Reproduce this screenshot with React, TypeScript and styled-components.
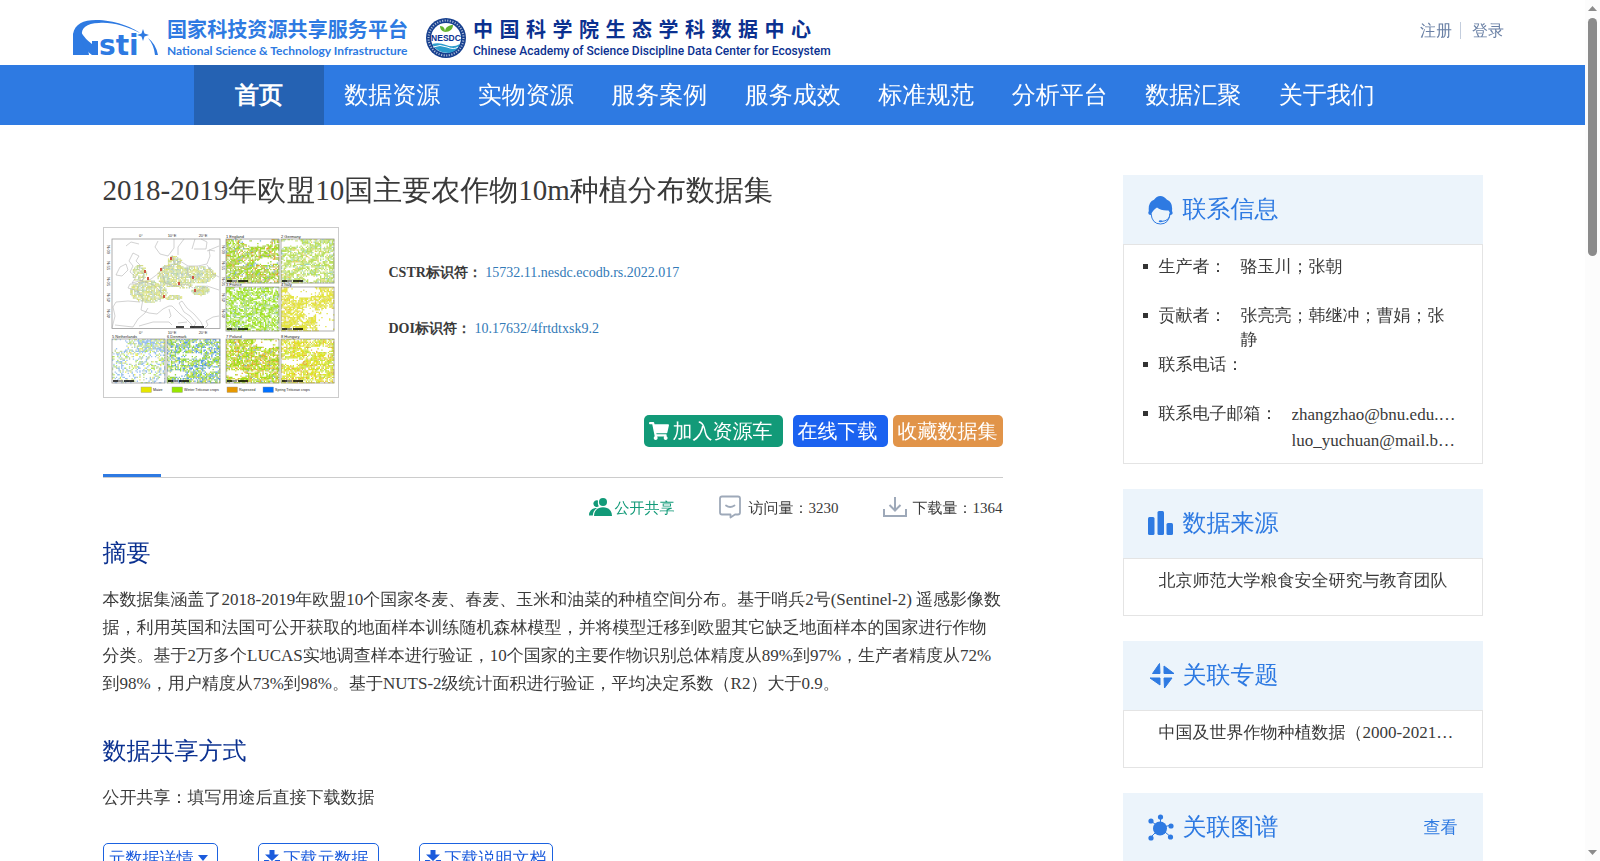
import React from 'react';
import styled, { createGlobalStyle } from 'styled-components';
import { FaShoppingCart } from 'react-icons/fa';

const blue = '#2e7ae2';
const navy = '#0b3190';
const green = '#129a78';
const serif = '"Liberation Serif", "WenQuanYi Zen Hei", "WenQuanYi Micro Hei", "Droid Sans Fallback", "Noto Sans CJK SC", serif';
const boldSerif = '"Liberation Serif", serif';
const sans = '"Liberation Sans", "Noto Sans CJK SC", sans-serif';

const GlobalStyle = createGlobalStyle`
  * { box-sizing: border-box; }
  body { margin: 0; background: #fff; color: #3a3a3a; font-family: ${serif}; }
  a { text-decoration: none; color: inherit; }
  h1, h2, h3, p, ul, dl, dd { margin: 0; padding: 0; font-weight: 400; }
  button { font-family: inherit; cursor: pointer; }
`;

/* ---------- page frame ---------- */

const Shell = styled.div`
  display: flex;
  height: 100vh;
`;

const Page = styled.div`
  flex: 1;
  min-width: 0;
  overflow: auto;
  scrollbar-width: none;
`;

const ScrollTrack = styled.div`
  display: flex;
  flex-direction: column;
  align-items: center;
  width: 15px;
  padding: 6px 0;
  background: #fcfcfc;
`;

const ScrollThumb = styled.div`
  width: 9px;
  height: 28%;
  margin: 7px 0 auto;
  border-radius: 5px;
  background: #8b8b8b;
`;

const ScrollArrow = styled.svg`
  display: block;
  width: 9px;
  height: 5px;
  fill: #8b8b8b;
`;

/* ---------- header ---------- */

const Header = styled.header`
  display: flex;
  justify-content: space-between;
  height: 65px;
  padding: 0 81px 0 72px;
`;

const Brand = styled.div`
  display: flex;
  align-items: flex-start;
  padding-top: 17px;
`;

const BrandText = styled.div<{ $color: string; $width: number }>`
  width: ${(p) => p.$width}px;
  color: ${(p) => p.$color};
  font-family: ${sans};
  white-space: nowrap;
`;

const BrandName = styled.div`
  font-size: 20px;
  line-height: 26px;
  font-weight: 700;
  text-align-last: justify;
`;

const BrandSub = styled.div<{ $face: string; $weight: number }>`
  font-family: ${(p) => p.$face}, sans-serif;
  font-size: 12px;
  font-weight: ${(p) => p.$weight};
  line-height: 16px;
`;

const NstiMark = styled.svg`
  width: 88px;
  height: 40px;
  margin-right: 7px;
`;

const NesdcMark = styled.svg`
  width: 42px;
  height: 42px;
  margin: 0 6px 0 17px;
`;

const Account = styled.div`
  display: flex;
  align-items: flex-start;
  padding-top: 22px;
  color: #6a80a5;
  font-size: 16px;
  line-height: 17px;
`;

const AccountLink = styled.a`
  & + & {
    margin-left: 8px;
    padding-left: 11px;
    border-left: 1px solid #c3cddd;
  }
`;

const Nav = styled.nav`
  background: ${blue};
`;

const NavList = styled.div`
  display: flex;
  max-width: 1198px;
  margin: 0 auto;
`;

const NavItem = styled.a<{ $active?: boolean }>`
  flex: ${(p) => (p.$active ? '0 0 130px' : '1')};
  padding-left: ${(p) => (p.$active ? 0 : 4)}px;
  background: ${(p) => (p.$active ? '#2562b3' : 'transparent')};
  font-family: ${(p) => (p.$active ? boldSerif : 'inherit')};
  font-weight: ${(p) => (p.$active ? 700 : 400)};
  color: #fff;
  font-size: 24px;
  line-height: 60px;
  text-align: center;
  white-space: nowrap;
`;

/* ---------- body ---------- */

const Main = styled.main`
  display: flex;
  gap: 120px;
  max-width: 1380px;
  margin: 0 auto;
  padding-bottom: 60px;
`;

const Article = styled.article`
  flex: 1;
  min-width: 0;
  padding-top: 45px;
`;

const Title = styled.h1`
  font-size: 29px;
  line-height: 40px;
`;

const Summary = styled.div`
  display: flex;
  gap: 50px;
  margin-top: 17px;
`;

const Thumb = styled.svg`
  display: block;
  width: 236px;
  height: 171px;
  border: 1px solid #ccc;
`;

const Identifiers = styled.div`
  display: flex;
  flex-direction: column;
  gap: 36px;
  padding-top: 36px;
  font-size: 14px;
  line-height: 20px;
`;

const IdLabel = styled.b`
  font-family: ${boldSerif};
`;

const IdLink = styled.a`
  color: #337ab7;
`;

const Actions = styled.div`
  display: flex;
  justify-content: flex-end;
  margin-top: 17px;
`;

const ActionButton = styled.button<{ $bg: string; $end?: number; $gap?: number }>`
  display: flex;
  align-items: center;
  gap: 4px;
  height: 32px;
  margin-left: ${(p) => p.$gap ?? 0}px;
  padding: 0 ${(p) => p.$end ?? 5}px 0 5px;
  border: 0;
  border-radius: 5px;
  background: ${(p) => p.$bg};
  color: #fff;
  font-size: 20px;
  line-height: 32px;
`;

const Divider = styled.div`
  margin-top: 27px;
  border-bottom: 1px solid #ccc;
  &::before {
    content: '';
    display: block;
    width: 58px;
    height: 3px;
    background: ${blue};
  }
`;

const Stats = styled.div`
  display: flex;
  justify-content: flex-end;
  gap: 44px;
  margin-top: 17px;
  font-size: 15px;
  line-height: 26px;
`;

const Stat = styled.span<{ $color?: string; $gap: number }>`
  display: flex;
  align-items: center;
  gap: ${(p) => p.$gap}px;
  color: ${(p) => p.$color ?? '#3a3a3a'};
  & > svg { display: block; margin-bottom: 2px; }
`;

const SectionTitle = styled.h2<{ $top: number }>`
  margin-top: ${(p) => p.$top}px;
  color: ${navy};
  font-size: 24px;
  line-height: 30px;
`;

const Paragraph = styled.p`
  margin-top: 18px;
  font-size: 17px;
  line-height: 28px;
`;

const Downloads = styled.div`
  display: flex;
  gap: 40px;
  margin-top: 31px;
`;

const OutlineButton = styled.button<{ $end?: number }>`
  display: flex;
  align-items: center;
  gap: 4px;
  height: 32px;
  padding: 0 ${(p) => p.$end ?? 5}px 2px 5px;
  border: 1px solid #1b62e0;
  border-radius: 5px;
  background: #fff;
  color: #1b5bdc;
  font-size: 17px;
`;

/* ---------- sidebar ---------- */

const Sidebar = styled.aside`
  display: flex;
  flex: 0 0 360px;
  flex-direction: column;
  gap: 25px;
  min-width: 0;
  padding-top: 50px;
`;

const PanelHead = styled.div`
  display: flex;
  align-items: center;
  height: 69px;
  padding: 0 25px 2px;
  background: #ecf4fb;
  color: ${blue};
  & > svg { display: block; width: 28px; height: 30px; margin: 4px 7px 0 0; }
`;

const PanelTitle = styled.h3`
  flex: 1;
  font-size: 24px;
  line-height: 36px;
`;

const PanelLink = styled.a`
  padding-top: 2px;
  font-size: 17px;
`;

const PanelBody = styled.div<{ $bottom: number }>`
  padding: 10px 24px ${(p) => p.$bottom}px 35px;
  border: 1px solid #e4e4e4;
  font-size: 17px;
  line-height: 24px;
`;

const Ellipsis = styled.a`
  display: block;
  overflow: hidden;
  text-overflow: ellipsis;
  white-space: nowrap;
`;

const ContactRow = styled.dl`
  display: flex;
  align-items: flex-start;
  min-height: 49px;
  &::before {
    content: '';
    flex: none;
    width: 5px;
    height: 5px;
    margin: 9px 11px 0 -16px;
    background: #333;
  }
`;

const ContactLabel = styled.dt`
  flex: none;
  margin-right: 14px;
`;

const ContactValue = styled.dd`
  flex: 1;
  min-width: 0;
`;

const Mail = styled(Ellipsis)`
  line-height: 26px;
`;

/* ---------- crop map thumbnail ---------- */

const crop = { maize: '#e6e600', winter: '#98e600', rape: '#e69800', spring: '#0070ff' };
const CELL = 1.3;

function random(seed: number) {
  let s = seed;
  return () => {
    s = (s * 1664525 + 1013904223) % 4294967296;
    return s / 4294967296;
  };
}

type Mix = [string, number][];
type Field = { x: number; y: number; name: string; mix: Mix; density: number; holes: [number, number, number, number][] };

const fields: Field[] = [
  { x: 123, y: 12, name: '1 England', density: 0.88, mix: [['#a5dc2a', 0.55], ['#b0c860', 0.25], ['#e0a030', 0.14], ['#7fb0d0', 0.06]], holes: [[30, 0, 15, 7], [40, 22, 12, 3]] },
  { x: 178, y: 12, name: '2 Germany', density: 0.8, mix: [['#bce060', 0.62], ['#d0e080', 0.24], ['#9fd4bc', 0.1], ['#e6d060', 0.04]], holes: [[8, 4, 12, 3], [30, 38, 8, 2]] },
  { x: 123, y: 60, name: '3 France', density: 0.8, mix: [['#a2e42a', 0.6], ['#b0dc78', 0.27], ['#8fc8b0', 0.09], ['#d8e060', 0.04]], holes: [] },
  { x: 178, y: 60, name: '4 Italy', density: 0.9, mix: [['#e4e440', 0.7], ['#dcdc78', 0.22], ['#e6c850', 0.08]], holes: [[22, 3, 16, 7], [46, 34, 12, 14], [28, 24, 6, 5]] },
  { x: 9, y: 112, name: '5 Netherlands', density: 0.45, mix: [['#9cc2ee', 0.5], ['#b4e660', 0.17], ['#c0d8a0', 0.23], ['#ecec60', 0.1]], holes: [[6, 6, 10, 5]] },
  { x: 64, y: 112, name: '6 Denmark', density: 0.8, mix: [['#94d840', 0.42], ['#5fa0e0', 0.27], ['#8fc0b0', 0.17], ['#d8e050', 0.14]], holes: [[22, 16, 14, 3], [8, 34, 10, 3], [44, 30, 8, 2]] },
  { x: 123, y: 112, name: '7 Poland', density: 0.92, mix: [['#a4dc20', 0.5], ['#e0b030', 0.22], ['#d0e030', 0.22], ['#7fb0b0', 0.06]], holes: [[42, 4, 14, 4], [8, 34, 9, 4]] },
  { x: 178, y: 112, name: '8 Hungary', density: 0.86, mix: [['#e2e224', 0.5], ['#c4e440', 0.3], ['#e6b440', 0.2]], holes: [[38, 10, 12, 3], [10, 22, 12, 3]] },
];

function pick(mix: Mix, r: number) {
  let sum = 0;
  for (const [color, share] of mix) {
    sum += share;
    if (r < sum) return color;
  }
  return mix[0][0];
}

function dots(test: (x: number, y: number) => number, mix: Mix, w: number, h: number, seed: number) {
  const rand = random(seed);
  const paths: Record<string, string> = {};
  for (let y = 0; y < h; y += CELL) {
    for (let x = 0; x < w; x += CELL) {
      const keep = rand() < test(x, y);
      const color = pick(mix, rand());
      if (keep) paths[color] = (paths[color] ?? '') + `M${x.toFixed(1)} ${y.toFixed(1)}h${CELL}v${CELL}h-${CELL}z`;
    }
  }
  return Object.entries(paths).map(([color, d]) => <path key={color} d={d} fill={color} />);
}

const inside = (x: number, y: number, e: [number, number, number, number]) =>
  ((x - e[0]) / e[2]) ** 2 + ((y - e[1]) / e[3]) ** 2 < 1;

const farmland: { e: [number, number, number, number]; d: number }[] = [
  { e: [27, 34, 7, 9], d: 0.7 },
  { e: [36, 52, 19, 11], d: 0.8 },
  { e: [60, 36, 15, 12], d: 0.85 },
  { e: [62, 21, 7, 5], d: 0.8 },
  { e: [85, 35, 18, 9], d: 0.8 },
  { e: [88, 51, 9, 5], d: 0.9 },
  { e: [61, 58, 9, 3], d: 0.7 },
  { e: [72, 44, 10, 5], d: 0.6 },
];

function CropMap() {
  return (
    <Thumb viewBox="0 0 234 169" role="img" aria-label="Crop distribution maps" fontFamily="Liberation Sans, sans-serif" fontSize="4">
      <g transform="translate(8 11)">
        <g opacity="0.8">
          {dots(
            (x, y) => farmland.reduce((m, f) => (inside(x, y, f.e) ? Math.max(m, f.d) : m), 0),
            [['#ccd66c', 0.45], ['#b4d48c', 0.28], ['#a8c4b4', 0.17], ['#dede50', 0.1]], 107, 89, 77
          )}
        </g>
        <g fill="none" stroke="#b4b4b4" strokeWidth="0.6">
          <path d="M21 14l6 3-3 5 4 4-1 5 5 4-1 6-11 3 4-6-6-5 3-6-4-5zM8 28l6-3 2 6-6 6-6-1zM14 7l5-4 8 2" />
          <path d="M46 2l-3 6 5 7 8 2 6-8 0-9M66 16l0-8 6-8M60 16l3 10 5-4 8 5 10 0 9-2 3-8-1-6 6 1M80 10l3-10M82 10l12 0 1-7-6-3M95 12l12-5" />
          <path d="M60 27l-8 1-5 6-8 6-6 3-5-2 0 4-10 0-2 4 10 3 5 8-2 11 8 3 8 1 6-5 6-3 3 0 8 8 6 5 5 5 2 4 3-5-6-7-6-4-5-9 3-2 5 7 7 6 7 8 3 7 4-4-2-4 7-4 6-1" />
          <path d="M28 63l-12-1-12 1-3 5 2 9-3 12M3 86l18 2 5-8 7-6 3-5M57 70l2 7-2 2M27 87l14-4 16 0 3 3M33 43l9 3 8 8-2 9M50 34l3 10 10 3 12-2 6 4M75 27l1 9 8 5M95 26l6 9 6 3M81 54l14-7 12 4M66 84l9-1" />
        </g>
        <g fill="#c54">
          {[[33, 33], [36, 40], [49, 31], [59, 20], [67, 45], [81, 39], [83, 52], [52, 58]].map(([x, y]) => (
            <path key={`${x}-${y}`} d={`M${x - 1} ${y + 1}h2v-3h-2z`} />
          ))}
        </g>
        <path d="M64 88h8m6 0h14" stroke="#000" strokeWidth="1.4" />
        <rect width="108" height="89.5" fill="none" stroke="#999" strokeWidth="0.8" />
      </g>
      <g fill="#333">
        {['0°', '10°E', '20°E'].map((t, i) => (
          <React.Fragment key={t}>
            <text x={37 + i * 31} y="9" textAnchor="middle">{t}</text>
            <text x={37 + i * 31} y="106" textAnchor="middle">{t}</text>
          </React.Fragment>
        ))}
        {['60°N', '55°N', '50°N', '45°N', '40°N'].map((t, i) => (
          <React.Fragment key={t}>
            <text transform={`translate(6 ${26 + i * 16}) rotate(-90)`}>{t}</text>
            <text transform={`translate(121 ${26 + i * 16}) rotate(-90)`}>{t}</text>
          </React.Fragment>
        ))}
      </g>
      {fields.map((f, i) => (
        <g key={f.name} transform={`translate(${f.x - 1} ${f.y - 1})`}>
          {dots(
            (x, y) => {
              if (f.holes.some((h) => inside(x, y, h))) return 0.05;
              if (i === 4 && x > 26 && y < 12) return 0.8;
              return f.density * (0.85 + 0.2 * Math.sin(x / 3 + y / 2));
            },
            f.mix, 52, 43, 31 + i * 17
          )}
          <path d="M1 42h5m6 0h10" stroke="#000" strokeWidth="1.6" />
          <path d="M6 42h5" stroke="#777" strokeWidth="1.6" />
          <rect width="53" height="44" fill="none" stroke="#999" strokeWidth="0.8" />
          <text x="0" y="-1" fill="#222">{f.name}</text>
        </g>
      ))}
      {([['Maize', crop.maize, 37], ['Winter Triticeae crops', crop.winter, 68], ['Rapeseed', crop.rape, 123], ['Spring Triticeae crops', crop.spring, 159]] as [string, string, number][]).map(([t, c, x]) => (
        <g key={t}>
          <rect x={x} y="159" width="10.5" height="5.5" fill={c} stroke="#999" strokeWidth="0.4" />
          <text x={x + 12} y="163.4" fontSize="3.6" fill="#222">{t}</text>
        </g>
      ))}
    </Thumb>
  );
}

/* ---------- logos and icons ---------- */

const NstiLogo = () => (
  <NstiMark viewBox="0 0 88 40" fill={blue} aria-label="NSTI">
    <path d="M1 38V17C3 7 11 3 24 3C42 3 60 10 68 16C54 9 40 5 27 6C14 6 9 12 10 18C11 25 16 28 17 38Z" />
    <path d="M9 15Q13 22 20 27V24H26V38H20Q14 34 9 24Z" />
    <path d="M71 12l1.500 4.500 4.500 1.500-4.500 1.500-1.500 4.500-1.500-4.500-4.500-1.500 4.500-1.500z" />
    <path d="M76 21Q84 27 86 38H83Q82 28 76 21Z" />
    <text x="27" y="38" fontFamily="DejaVu Sans, sans-serif" fontWeight="700" fontSize="28">sti</text>
  </NstiMark>
);

const NesdcLogo = () => (
  <NesdcMark viewBox="0 0 42 42" aria-label="NESDC">
    <circle cx="21" cy="21" r="20" fill="#17408f" />
    <circle cx="21" cy="21" r="17.500" fill="none" stroke="#fff" strokeWidth="2" strokeDasharray="1.100 1.500" opacity="0.65" />
    <circle cx="21" cy="21" r="15" fill="#fff" />
    <path d="M20 15C16 14 15 11 15 9C19 9 20 12 20 15ZM20 15C20 10 24 8 28 8C28 12 25 15 20 15Z" fill="#62b32e" />
    <path d="M7 27Q14 25 21 28T35 27Q33 34 24 36Q12 36 7 27Z" fill="#2b9ccc" />
    <path d="M8 30Q15 27 22 30T33 30" fill="none" stroke="#fff" strokeWidth="1" />
    <text x="21" y="24" textAnchor="middle" fill={navy} fontFamily="Liberation Sans, sans-serif" fontWeight="700" fontSize="8.500">NESDC</text>
  </NesdcMark>
);

const PeopleIcon = () => (
  <svg width="23" height="20" viewBox="0 0 23 20" fill="currentColor">
    <circle cx="14" cy="5" r="4" />
    <path d="M5 19C5 13 9 10.200 14 10.200S23 13 23 19Z" />
    <path d="M9 3.400A3.400 3.400 0 1 0 9.800 9.300Q8.700 7.500 8.900 5.500ZM6.500 11Q0 12 0 18.500H3.800Q4 13.500 8 11Z" />
  </svg>
);

const VisitIcon = () => (
  <svg width="22" height="24" viewBox="0 0 22 24" fill="none" stroke="#9ea9b9" strokeWidth="1.800" strokeLinejoin="round" strokeLinecap="round">
    <path d="M3 1.500H19Q21 1.500 21 3.500V17.500Q21 19.500 19 19.500H16L11.500 22.500V19.500H3Q1 19.500 1 17.500V3.500Q1 1.500 3 1.500Z" />
    <path d="M7 10.500Q11 13.500 15.500 10.500" />
  </svg>
);

const TrayIcon = () => (
  <svg width="24" height="22" viewBox="0 0 24 22" fill="none" stroke="#9ea9b9" strokeWidth="2">
    <path d="M1 13V20H23V13M12 1V14M6.500 9L12 14.500L17.500 9" />
  </svg>
);

const SaveIcon = () => (
  <svg width="16" height="18" viewBox="0 0 16 18" fill="currentColor">
    <path d="M5.500 1H10.500V5.500H15L8 12L1 5.500H5.500Z" />
    <path d="M0 11H4.500L8 14L11.500 11H16V17H0Z" />
  </svg>
);

const CaretIcon = () => (
  <svg width="10" height="6" viewBox="0 0 10 6" fill="currentColor">
    <path d="M0 0H10L5 6Z" />
  </svg>
);

const AgentIcon = () => (
  <svg viewBox="0 0 28 30" fill="currentColor">
    <path d="M3 19Q-1 19 .8 15Q0 6 6 3.800Q8.500 0 12.300 0T19 3.800Q25 6 24 15Q26 19 22 19Q22 15.500 20.500 14.500Q13 15 9 11.500Q4.500 14 3 19Z" />
    <path d="M3 17.500Q4 28 12.500 28T22 17.500Q22 25 13 25.500" fill="none" stroke="currentColor" strokeWidth="1" />
    <ellipse cx="12.500" cy="25.300" rx="1.800" ry="1" />
  </svg>
);

const BarsIcon = () => (
  <svg viewBox="0 0 28 30" fill="currentColor">
    <rect x="0" y="7" width="6.500" height="18" rx="1.500" />
    <rect x="9.500" y="1" width="6.500" height="24" rx="1.500" />
    <rect x="18.500" y="13" width="6.500" height="12" rx="1.500" />
  </svg>
);

const PinwheelIcon = () => (
  <svg viewBox="0 0 28 30" fill="currentColor" stroke="currentColor" strokeLinejoin="round">
    <path d="M11.500 1.500L12 11.500H4.500ZM16 4V11.500H26ZM2 16H12V23ZM16 16H24L16.500 26Z" />
  </svg>
);

const GraphIcon = () => (
  <svg viewBox="0 0 28 30" fill="currentColor">
    <path d="M12.500 2V14M3 7L12 14L23 11M3 23L12 14L23 23" stroke="currentColor" fill="none" strokeWidth="1" />
    <circle cx="12" cy="14.500" r="7" />
    <circle cx="12.500" cy="3" r="2.600" />
    <circle cx="3" cy="7" r="2.600" />
    <circle cx="23" cy="12" r="2.600" />
    <circle cx="3" cy="24" r="2.600" />
    <circle cx="22.500" cy="23" r="2.600" />
  </svg>
);

const navItems = ['数据资源', '实物资源', '服务案例', '服务成效', '标准规范', '分析平台', '数据汇聚', '关于我们'];

export default function App() {
  return (
    <>
      <GlobalStyle />
      <Shell>
        <Page>
          <Header>
            <Brand>
              <NstiLogo />
              <BrandText $color={blue} $width={241}>
                <BrandName>国家科技资源共享服务平台</BrandName>
                <BrandSub $face="Lato" $weight={700}>National Science &amp; Technology Infrastructure</BrandSub>
              </BrandText>
              <NesdcLogo />
              <BrandText $color={navy} $width={338}>
                <BrandName>中国科学院生态学科数据中心</BrandName>
                <BrandSub $face="Roboto" $weight={500}>Chinese Academy of Science Discipline Data Center for Ecosystem</BrandSub>
              </BrandText>
            </Brand>
            <Account>
              <AccountLink href="#register">注册</AccountLink>
              <AccountLink href="#login">登录</AccountLink>
            </Account>
          </Header>
          <Nav>
            <NavList>
              <NavItem href="#home" $active>首页</NavItem>
              {navItems.map((t) => (
                <NavItem key={t} href="#nav">{t}</NavItem>
              ))}
            </NavList>
          </Nav>
          <Main>
            <Article>
              <Title>2018-2019年欧盟10国主要农作物10m种植分布数据集</Title>
              <Summary>
                <CropMap />
                <Identifiers>
                  <div>
                    <IdLabel>CSTR标识符：</IdLabel> <IdLink href="#cstr">15732.11.nesdc.ecodb.rs.2022.017</IdLink>
                  </div>
                  <div>
                    <IdLabel>DOI标识符：</IdLabel> <IdLink href="#doi">10.17632/4frtdtxsk9.2</IdLink>
                  </div>
                </Identifiers>
              </Summary>
              <Actions>
                <ActionButton $bg={green} $end={10}><FaShoppingCart size={20} />加入资源车</ActionButton>
                <ActionButton $bg="#1b62f0" $end={10} $gap={10}>在线下载</ActionButton>
                <ActionButton $bg="#e19449" $gap={5}>收藏数据集</ActionButton>
              </Actions>
              <Divider />
              <Stats>
                <Stat $color={green} $gap={3}><PeopleIcon />公开共享</Stat>
                <Stat $gap={8}><VisitIcon /><span>访问量：3230</span></Stat>
                <Stat $gap={6}><TrayIcon /><span>下载量：1364</span></Stat>
              </Stats>
              <SectionTitle $top={17}>摘要</SectionTitle>
              <Paragraph>
                本数据集涵盖了2018-2019年欧盟10个国家冬麦、春麦、玉米和油菜的种植空间分布。基于哨兵2号(Sentinel-2) 遥感影像数据，利用英国和法国可公开获取的地面样本训练随机森林模型，并将模型迁移到欧盟其它缺乏地面样本的国家进行作物分类。基于2万多个LUCAS实地调查样本进行验证，10个国家的主要作物识别总体精度从89%到97%，生产者精度从72%到98%，用户精度从73%到98%。基于NUTS-2级统计面积进行验证，平均决定系数（R2）大于0.9。
              </Paragraph>
              <SectionTitle $top={38}>数据共享方式</SectionTitle>
              <Paragraph>公开共享：填写用途后直接下载数据</Paragraph>
              <Downloads>
                <OutlineButton $end={9}>元数据详情<CaretIcon /></OutlineButton>
                <OutlineButton $end={9}><SaveIcon />下载元数据</OutlineButton>
                <OutlineButton><SaveIcon />下载说明文档</OutlineButton>
              </Downloads>
            </Article>
            <Sidebar>
              <section>
                <PanelHead><AgentIcon /><PanelTitle>联系信息</PanelTitle></PanelHead>
                <PanelBody $bottom={9}>
                  <ContactRow>
                    <ContactLabel>生产者：</ContactLabel>
                    <ContactValue>骆玉川；张朝</ContactValue>
                  </ContactRow>
                  <ContactRow>
                    <ContactLabel>贡献者：</ContactLabel>
                    <ContactValue>张亮亮；韩继冲；曹娟；张静</ContactValue>
                  </ContactRow>
                  <ContactRow>
                    <ContactLabel>联系电话：</ContactLabel>
                    <ContactValue />
                  </ContactRow>
                  <ContactRow>
                    <ContactLabel>联系电子邮箱：</ContactLabel>
                    <ContactValue>
                      <Mail href="#mail">zhangzhao@bnu.edu.cn；</Mail>
                      <Mail href="#mail">luo_yuchuan@mail.bnu.edu.cn</Mail>
                    </ContactValue>
                  </ContactRow>
                </PanelBody>
              </section>
              <section>
                <PanelHead><BarsIcon /><PanelTitle>数据来源</PanelTitle></PanelHead>
                <PanelBody $bottom={22}><Ellipsis href="#source">北京师范大学粮食安全研究与教育团队</Ellipsis></PanelBody>
              </section>
              <section>
                <PanelHead><PinwheelIcon /><PanelTitle>关联专题</PanelTitle></PanelHead>
                <PanelBody $bottom={22}><Ellipsis href="#topic">中国及世界作物种植数据（2000-2021年）</Ellipsis></PanelBody>
              </section>
              <section>
                <PanelHead><GraphIcon /><PanelTitle>关联图谱</PanelTitle><PanelLink href="#graph">查看</PanelLink></PanelHead>
              </section>
            </Sidebar>
          </Main>
        </Page>
        <ScrollTrack aria-hidden>
          <ScrollArrow viewBox="0 0 9 5"><path d="M0 5L4.500 0L9 5Z" /></ScrollArrow>
          <ScrollThumb />
          <ScrollArrow viewBox="0 0 9 5"><path d="M0 0L4.500 5L9 0Z" /></ScrollArrow>
        </ScrollTrack>
      </Shell>
    </>
  );
}
